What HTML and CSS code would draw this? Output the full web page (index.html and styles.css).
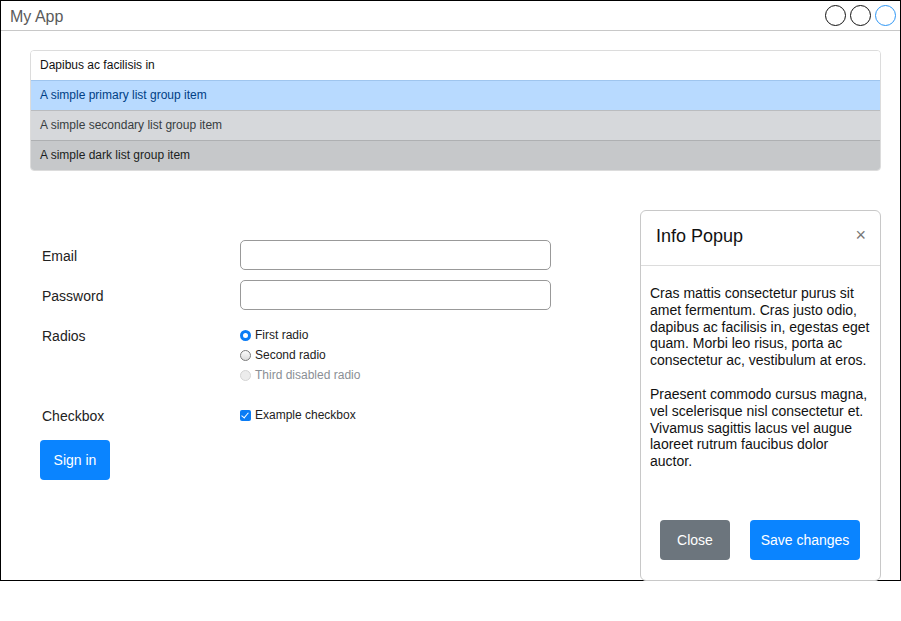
FILE: index.html
```html
<!DOCTYPE html>
<html>
<head>
<meta charset="utf-8">
<link rel="stylesheet" href="styles.css">
</head>
<body>
<div class="window">
  <div class="titlebar">
    <span class="title">My App</span>
    <div class="controls">
      <span class="ctl"></span>
      <span class="ctl"></span>
      <span class="ctl ctl-blue"></span>
    </div>
  </div>
  <div class="content">
    <ul class="list-group">
      <li class="item item-plain">Dapibus ac facilisis in</li>
      <li class="item item-primary">A simple primary list group item</li>
      <li class="item item-secondary">A simple secondary list group item</li>
      <li class="item item-dark">A simple dark list group item</li>
    </ul>
    <form class="form">
      <div class="row row-email">
        <label class="lbl lbl-input">Email</label>
        <input class="field" type="text">
      </div>
      <div class="row row-pass">
        <label class="lbl lbl-input">Password</label>
        <input class="field" type="password">
      </div>
      <div class="row row-radios">
        <label class="lbl lbl-top">Radios</label>
        <div class="choices">
          <label class="choice"><input class="radio" type="radio" name="r" checked><span>First radio</span></label>
          <label class="choice"><input class="radio" type="radio" name="r"><span>Second radio</span></label>
          <label class="choice choice-disabled"><input class="radio" type="radio" name="r" disabled><span>Third disabled radio</span></label>
        </div>
      </div>
      <div class="row row-check">
        <label class="lbl lbl-top">Checkbox</label>
        <div class="choices">
          <label class="choice"><input class="check" type="checkbox" checked><span>Example checkbox</span></label>
        </div>
      </div>
      <button type="button" class="btn btn-primary btn-signin">Sign in</button>
    </form>
  </div>
  <div class="popup">
    <div class="popup-header">
      <span class="popup-title">Info Popup</span>
      <span class="popup-close">&times;</span>
    </div>
    <div class="popup-body">
      <p>Cras mattis consectetur purus sit amet fermentum. Cras justo odio, dapibus ac facilisis in, egestas eget quam. Morbi leo risus, porta ac consectetur ac, vestibulum at eros.</p>
      <p>Praesent commodo cursus magna, vel scelerisque nisl consectetur et. Vivamus sagittis lacus vel augue laoreet rutrum faucibus dolor auctor.</p>
    </div>
    <div class="popup-footer">
      <button type="button" class="btn btn-secondary btn-close">Close</button>
      <button type="button" class="btn btn-primary btn-save">Save changes</button>
    </div>
  </div>
</div>
</body>
</html>
```

FILE: styles.css
```css
* { box-sizing: border-box; }
html, body { margin: 0; padding: 0; background: #fff; }
body { font-family: "Liberation Sans", Arial, sans-serif; color: #212529; }

.window {
  position: relative;
  width: 901px;
  height: 581px;
  border: 1px solid #000;
  background: #fff;
}

.titlebar {
  height: 30px;
  border-bottom: 1px solid #c8c8c8;
  display: flex;
  align-items: center;
  justify-content: space-between;
  padding: 0 4px 0 9px;
}
.title { font-size: 16px; color: #5a5a5a; padding-top: 2px; }
.controls { display: flex; gap: 4px; }
.ctl {
  width: 21px; height: 21px;
  border: 1px solid #111;
  border-radius: 50%;
}
.ctl-blue { border-color: #2d96f5; }

.content { padding: 19px 19px 0 29px; }

.list-group {
  list-style: none;
  margin: 0;
  padding: 0;
  width: 851px;
  border: 1px solid #dcdcdc;
  border-radius: 4px;
  overflow: hidden;
}
.item {
  height: 30px;
  line-height: 29px;
  padding-left: 9px;
  font-size: 12px;
  border-top: 1px solid rgba(0,0,0,0.1);
}
.item-plain { border-top: none; height: 29px; line-height: 28px; color: #111; background: #fff; }
.item-primary { background: #b8daff; color: #004085; border-top-color: #9fc5ee; }
.item-secondary { background: #d6d8db; color: #383d41; border-top-color: #babcbf; }
.item-dark { background: #c6c8ca; color: #1b1e21; border-top-color: #aeb0b2; }

.form { margin-top: 69px; padding-left: 10px; }
.row { display: flex; align-items: flex-start; }
.lbl { width: 200px; flex: none; font-size: 14px; color: #222; padding-left: 2px; }
.lbl-input { height: 30px; line-height: 32px; }
.lbl-top { height: 20px; line-height: 22px; }
.row-pass { margin-top: 10px; }
.row-radios { margin-top: 15px; }
.row-check { margin-top: 20px; }

.field {
  width: 311px;
  height: 30px;
  border: 1px solid #999;
  border-radius: 5px;
  background: #fff;
  margin: 0;
}

.choices { display: flex; flex-direction: column; }
.choice {
  display: flex;
  align-items: center;
  height: 20px;
  font-size: 12px;
  color: #222;
}
.choice span { margin-left: 4px; }
.choice-disabled { color: #8a8f95; }

.radio {
  appearance: none;
  -webkit-appearance: none;
  width: 11px; height: 11px;
  margin: 0;
  border-radius: 50%;
  border: 1px solid #7a7a7a;
  background: linear-gradient(#fafafa, #dcdcdc);
}
.radio:checked {
  border: 3px solid #0a7cf5;
  background: #fff;
}
.radio:disabled {
  border-color: #d4d4d4;
  background: #ececec;
}
.check {
  appearance: none;
  -webkit-appearance: none;
  width: 11px; height: 11px;
  margin: 0;
  border-radius: 2px;
  background: #0a7cf5;
  position: relative;
}
.check::after {
  content: "";
  position: absolute;
  left: 3px; top: 1px;
  width: 3px; height: 6px;
  border: solid #fff;
  border-width: 0 1.5px 1.5px 0;
  transform: rotate(40deg);
}

.btn {
  height: 40px;
  border: none;
  border-radius: 4px;
  font-family: "Liberation Sans", Arial, sans-serif;
  font-size: 14px;
  color: #fff;
  padding: 0;
}
.btn-primary { background: #0a84ff; }
.btn-secondary { background: #6c757d; }
.btn-signin { width: 70px; margin-top: 15px; }

.popup {
  position: absolute;
  left: 639px;
  top: 209px;
  width: 241px;
  height: 371px;
  background: #fff;
  border: 1px solid #c8c8c8;
  border-radius: 6px;
  display: flex;
  flex-direction: column;
}
.popup-header {
  height: 55px;
  border-bottom: 1px solid #dcdcdc;
  display: flex;
  align-items: center;
  justify-content: space-between;
  padding: 0 14px 3px 15px;
}
.popup-title { font-size: 18px; color: #111; }
.popup-close { font-size: 18px; color: #777; padding-bottom: 2px; }

.popup-body {
  padding: 19px 9px 0 9px;
  font-size: 14px;
  line-height: 16.8px;
  color: #111;
  flex: 1;
}
.popup-body p { margin: 0 0 17px 0; }

.popup-footer {
  display: flex;
  gap: 20px;
  padding: 0 0 20px 19px;
}
.btn-close { width: 70px; }
.btn-save { width: 110px; }
```
